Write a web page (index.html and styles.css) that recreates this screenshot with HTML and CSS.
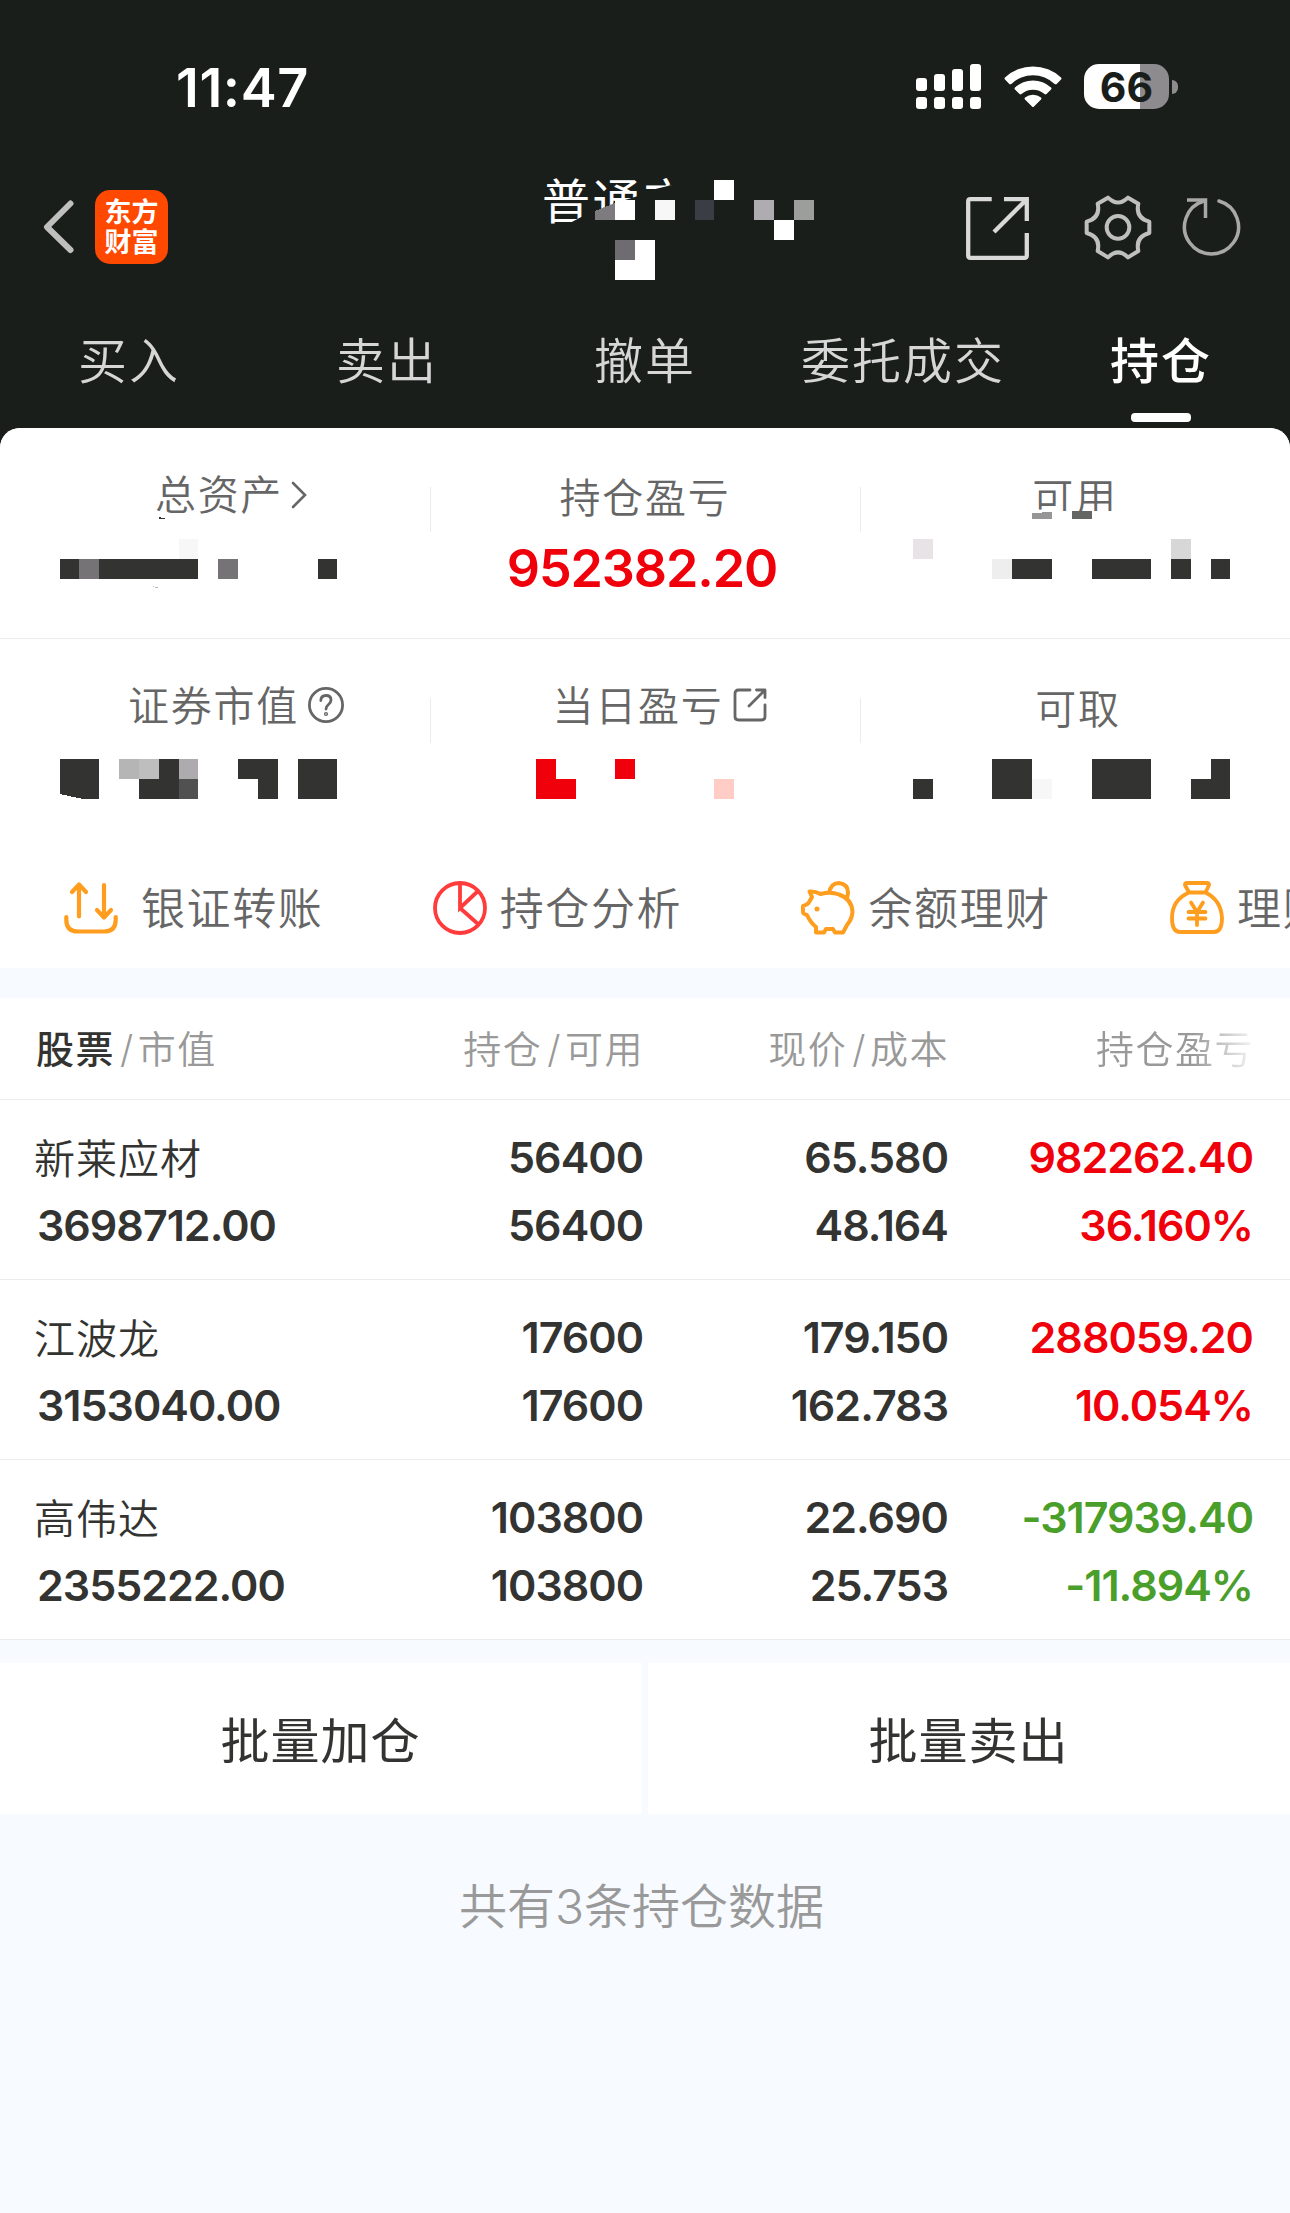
FILE: index.html
```html
<!DOCTYPE html>
<html lang="zh-CN">
<head>
    <meta charset="UTF-8">
    <meta name="viewport" content="width=device-width, initial-scale=1.0">
    <title>持仓</title>
    <link rel="stylesheet" href="styles.css">
</head>
<body>
    <header class="header">
        <div class="status-bar">
            <span class="time">11:47</span>
            <div class="status-icons">
                <svg class="signal" width="65" height="45" viewBox="0 0 65 45" fill="#fff">
                    <rect x="0" y="14" width="11" height="13" rx="3"/>
                    <rect x="18" y="10" width="11" height="17" rx="3"/>
                    <rect x="36" y="5" width="11" height="22" rx="3"/>
                    <rect x="54" y="0" width="11" height="27" rx="3"/>
                    <rect x="0" y="33" width="11" height="12" rx="3"/>
                    <rect x="18" y="33" width="11" height="12" rx="3"/>
                    <rect x="36" y="33" width="11" height="12" rx="3"/>
                    <rect x="54" y="33" width="11" height="12" rx="3"/>
                </svg>
                <svg class="wifi" width="58" height="43" viewBox="0 0 58 43" fill="#fff">
                    <path d="M1 12.5Q0 13.5 1 14.6L5.300 18.900Q6.300 19.800 7.400 18.900A31 31 0 0 1 50.600 18.900Q51.700 19.800 52.700 18.900L57 14.600Q58 13.500 57 12.500A41 41 0 0 0 1 12.500Z"/>
                    <path d="M11 22.500Q10 23.500 11 24.500L15.500 29Q16.500 29.800 17.500 29A17.500 17.500 0 0 1 40.500 29Q41.500 29.800 42.500 29L47 24.500Q48 23.500 47 22.500A26.500 26.500 0 0 0 11 22.500Z"/>
                    <path d="M21 32.500Q20 33.500 21 34.500L28 41.500Q29 42.500 30 41.500L37 34.500Q38 33.500 37 32.500A13 13 0 0 0 21 32.500Z"/>
                </svg>
                <div class="battery"><span class="battery-level">66</span></div>
                <span class="battery-tip"></span>
            </div>
        </div>

        <div class="nav-bar">
            <svg class="back" width="32" height="56" viewBox="0 0 32 56" fill="none" stroke="#bfbfbf" stroke-width="6" stroke-linecap="round" stroke-linejoin="round">
                <path d="M28.500 4.500L5 28L28.500 51"/>
            </svg>
            <div class="logo"><span>东方</span><span>财富</span></div>
            <div class="account">
                <span class="account-name">普通交</span>
                <svg class="account-mask" width="280" height="110" viewBox="540 175 280 110" shape-rendering="crispEdges">
                    <path fill="#7e7b7e" d="M595 211L615 203V220H595Z"/>
                    <rect x="615" y="200" width="20" height="20" fill="#fff"/>
                    <rect x="655" y="200" width="20" height="20" fill="#f7f7f7"/>
                    <rect x="695" y="200" width="19" height="20" fill="#3b3d44"/>
                    <rect x="714" y="180" width="20" height="20" fill="#fff"/>
                    <rect x="754" y="200" width="20" height="20" fill="#aeacb0"/>
                    <rect x="774" y="220" width="20" height="20" fill="#fff"/>
                    <rect x="794" y="200" width="20" height="20" fill="#9b9e9b"/>
                    <rect x="615" y="240" width="40" height="40" fill="#fff"/>
                    <rect x="615" y="240" width="20" height="20" fill="#6e6c70"/>
                </svg>
            </div>
            <svg class="share" width="64" height="64" viewBox="0 0 64 64" fill="none" stroke="#d9d9d9" stroke-width="4.300">
                <path d="M25.700 2.200H4.500Q2.200 2.200 2.200 4.500V58.500Q2.200 60.800 4.500 60.800H58.500Q60.800 60.800 60.800 58.500V36"/>
                <path d="M38 2.200H60.800V24M60 3L28 35"/>
            </svg>
            <svg class="settings" width="68" height="66" viewBox="611 493 204 198" fill="none" stroke="#bfbfbf" stroke-width="12" stroke-linejoin="round">
                <path d="M683 501Q713 530 743 501L774 519Q764.500 562 807 573V607Q764.500 618 774 661L743 680Q713 650 683 680L652 661Q661.500 618 619 607V573Q661.500 562 652 519Z"/>
                <circle cx="713" cy="590" r="34"/>
            </svg>
            <svg class="refresh" width="60" height="62" viewBox="0 0 60 62" fill="none" stroke="#a9a8a9" stroke-width="3.500">
                <path d="M37 5A27 27 0 1 1 22 5" stroke-linecap="round"/>
                <path d="M5 4H23.500V22"/>
            </svg>
        </div>

        <nav class="tabs">
            <span class="tab">买入</span>
            <span class="tab">卖出</span>
            <span class="tab">撤单</span>
            <span class="tab">委托成交</span>
            <span class="tab active">持仓</span>
        </nav>
    </header>

    <main>
        <section class="summary">
            <div class="summary-row">
                <div class="cell">
                    <div class="cell-label raised">总资产
                        <svg class="chevron" width="16" height="28" viewBox="0 0 16 28" fill="none" stroke="#666" stroke-width="2.600" stroke-linecap="round"><path d="M2 2L14 14L2 26"/></svg>
                    </div>
                    <svg class="mask" width="430" height="100" viewBox="0 505 430 100" fill="#333431" shape-rendering="crispEdges">
                        <path d="M159 517L165 518.500H159Z"/>
                        <path d="M152 586L158 587.500H155Z" fill="#bbb"/>
                        <rect x="179" y="539" width="19" height="20" fill="#f7f7f7"/>
                        <rect x="60" y="559" width="138" height="20"/>
                        <rect x="79" y="559" width="20" height="20" fill="#757376"/>
                        <rect x="218" y="559" width="20" height="20" fill="#757376"/>
                        <rect x="318" y="559" width="19" height="20"/>
                    </svg>
                </div>
                <div class="cell">
                    <div class="cell-label">持仓盈亏</div>
                    <div class="cell-value red">952382.20</div>
                </div>
                <div class="cell">
                    <div class="cell-label cut">可用</div>
                    <svg class="mask" width="430" height="100" viewBox="860 505 430 100" fill="#333431" shape-rendering="crispEdges">
                        <path d="M1032 513L1052 512V519H1032Z" fill="#969696"/>
                        <rect x="1072" y="511" width="20" height="8" fill="#646664"/>
                        <rect x="913" y="539" width="20" height="20" fill="#e7e3e7"/>
                        <rect x="1171" y="539" width="20" height="20" fill="#d7d7d7"/>
                        <rect x="992" y="559" width="20" height="20" fill="#eee"/>
                        <rect x="1012" y="559" width="40" height="20"/>
                        <rect x="1092" y="559" width="59" height="20"/>
                        <rect x="1171" y="559" width="20" height="20"/>
                        <rect x="1211" y="559" width="19" height="20"/>
                    </svg>
                </div>
            </div>
            <div class="summary-row second">
                <div class="cell">
                    <div class="cell-label value">证券市值
                        <svg class="help" width="36" height="36" viewBox="0 0 36 36" fill="none" stroke="#666" stroke-width="2.800" stroke-linecap="round">
                            <circle cx="18" cy="18" r="16.600"/>
                            <path d="M12.800 13.500Q13 8.500 18 8.500Q23 8.500 23 13Q23 15.500 20.500 17.500Q18 19.500 18 22"/>
                            <circle cx="18" cy="27" r="0.700"/>
                        </svg>
                    </div>
                    <svg class="mask" width="430" height="100" viewBox="0 715 430 100" fill="#333431" shape-rendering="crispEdges">
                        <path d="M60 759H99V799H83L60 794Z"/>
                        <rect x="119" y="759" width="20" height="20" fill="#b5b5b5"/>
                        <rect x="139" y="759" width="20" height="20" fill="#bebebe"/>
                        <path d="M159 759H179V799H139V779H159Z"/>
                        <rect x="179" y="759" width="19" height="20" fill="#adabae"/>
                        <rect x="179" y="779" width="19" height="20" fill="#525152"/>
                        <path d="M238 759H278V799H258V779H238Z"/>
                        <rect x="298" y="759" width="39" height="40"/>
                    </svg>
                </div>
                <div class="cell">
                    <div class="cell-label today">当日盈亏
                        <svg class="open" width="34" height="34" viewBox="0 0 34 34" fill="none" stroke="#666" stroke-width="2.800" stroke-linecap="round" stroke-linejoin="round">
                            <path d="M17 2H5.500Q2 2 2 5.500V28.500Q2 32 5.500 32H28.500Q32 32 32 28.500V17"/>
                            <path d="M23.500 2H32V9.500M31.500 2.500L16 18"/>
                        </svg>
                    </div>
                    <svg class="mask" width="430" height="100" viewBox="430 715 430 100" fill="#f0000a" shape-rendering="crispEdges">
                        <path d="M536 759H556V779H576V799H536Z"/>
                        <rect x="615" y="759" width="20" height="20"/>
                        <rect x="714" y="779" width="20" height="20" fill="#ffcdc5"/>
                    </svg>
                </div>
                <div class="cell">
                    <div class="cell-label lowered">可取</div>
                    <svg class="mask" width="430" height="100" viewBox="860 715 430 100" fill="#333431" shape-rendering="crispEdges">
                        <rect x="913" y="779" width="20" height="20"/>
                        <rect x="992" y="759" width="40" height="40"/>
                        <rect x="1032" y="779" width="20" height="20" fill="#f7f7f7"/>
                        <rect x="1092" y="759" width="59" height="40"/>
                        <path d="M1211 759H1230V799H1191V779H1211Z"/>
                    </svg>
                </div>
            </div>

            <div class="shortcuts">
                <div class="shortcut transfer">
                    <svg width="54" height="54" viewBox="0 0 54 54" fill="none" stroke="#ff9d1e" stroke-width="4.200" stroke-linecap="round" stroke-linejoin="round">
                        <path d="M15 35.500V4M8 11L15 3.500L22 11M40 4V35.500M33 29L40 36.500L47 29"/>
                        <path d="M2.300 36V39Q2.300 50.500 14 50.500H40Q51.700 50.500 51.700 39V36"/>
                    </svg>
                    <span>银证转账</span>
                </div>
                <div class="shortcut">
                    <svg width="54" height="54" viewBox="0 0 54 54" fill="none" stroke="#ff3b3b" stroke-width="3.800">
                        <circle cx="27" cy="27" r="25"/>
                        <path d="M27 2V27L45 10M27 27L45 43"/>
                    </svg>
                    <span>持仓分析</span>
                </div>
                <div class="shortcut">
                    <svg width="54" height="54" viewBox="0 0 54 54" fill="none" stroke="#ff9d1e" stroke-width="4" stroke-linejoin="round">
                        <path d="M8.500 10.500Q14 10 19.500 13Q30 10.500 38 13.500Q51 18 51.500 31Q51 38 46 44L42 51.500H34L32 48H25L23 51.500H15V46Q9 41 6 34Q2 33 2 31V25Q6 24 7.500 22Q10 18 11 16Z"/>
                        <path d="M28 12Q30 2 38 2Q47 3 47 12L46 17"/>
                        <circle cx="16" cy="28" r="2.500" fill="#ff9d1e" stroke="none"/>
                    </svg>
                    <span>余额理财</span>
                </div>
                <div class="shortcut">
                    <svg width="54" height="54" viewBox="0 0 54 54" fill="none" stroke="#ff9d1e" stroke-width="3.800" stroke-linecap="round" stroke-linejoin="round">
                        <path d="M19 11.500L15 4Q14.500 2 17 2H37Q39.500 2 39 4L35.500 11.500ZM19 11.500Q2 19 2 37Q2 51 10 51H44Q52 51 52 37Q51 19 35.500 11.500"/>
                        <path d="M21 21.500L27 31L33 21.500M18.500 31H35.500M18.500 37.500H35.500M27 31V44"/>
                    </svg>
                    <span>理财</span>
                </div>
            </div>
        </section>

        <section class="holdings">
            <div class="row head">
                <div><b>股票</b><i>/</i>市值</div>
                <div>持仓<i>/</i>可用</div>
                <div>现价<i>/</i>成本</div>
                <div class="fade">持仓盈亏</div>
            </div>
            <div class="row">
                <div><p class="name">新莱应材</p><p>3698712.00</p></div>
                <div><p>56400</p><p>56400</p></div>
                <div><p>65.580</p><p>48.164</p></div>
                <div class="red"><p>982262.40</p><p>36.160%</p></div>
            </div>
            <div class="row">
                <div><p class="name">江波龙</p><p>3153040.00</p></div>
                <div><p>17600</p><p>17600</p></div>
                <div><p>179.150</p><p>162.783</p></div>
                <div class="red"><p>288059.20</p><p>10.054%</p></div>
            </div>
            <div class="row">
                <div><p class="name">高伟达</p><p>2355222.00</p></div>
                <div><p>103800</p><p>103800</p></div>
                <div><p>22.690</p><p>25.753</p></div>
                <div class="green"><p>-317939.40</p><p>-11.894%</p></div>
            </div>
        </section>

        <div class="batch">
            <div class="batch-button">批量加仓</div>
            <div class="batch-button">批量卖出</div>
        </div>
        <p class="total">共有3条持仓数据</p>
    </main>
</body>
</html>
```

FILE: styles.css
```css
* {
    box-sizing: border-box;
}
body {
    margin: 0;
    width: 1290px;
    height: 2213px;
    overflow: hidden;
    font-family: Inter, "Noto Sans CJK SC", sans-serif;
    background-color: #1a1e1b;
    color: #333431;
}
p {
    margin: 0;
}
svg {
    display: block;
    flex: none;
}
.red {
    color: #f0000a;
}
.green {
    color: #4a9e2a;
}

/* Header */
.header {
    height: 428px;
    color: #fff;
}
.status-bar {
    display: flex;
    justify-content: space-between;
    height: 175px;
    padding: 64px 112px 0 176px;
}
.time {
    font-size: 54px;
    font-weight: 600;
    line-height: 47px;
    letter-spacing: 0.600px;
}
.status-icons {
    display: flex;
}
.wifi {
    margin: 1px 22px 0 23px;
}
.battery {
    width: 85px;
    height: 45px;
    border-radius: 15px;
    background: linear-gradient(to right, #fff 56px, #8e8b8f 56px);
    color: #1a1e1b;
    text-align: center;
}
.battery-level {
    font-size: 41px;
    font-weight: 700;
    line-height: 46px;
}
.battery-tip {
    width: 6px;
    height: 14px;
    margin: 16px 0 0 3px;
    border-radius: 0 6px 6px 0;
    background-color: #8e8b8f;
}
.nav-bar {
    display: flex;
    height: 125px;
    padding-left: 42px;
}
.back {
    margin-top: 24px;
}
.logo {
    display: flex;
    flex-direction: column;
    align-items: center;
    justify-content: center;
    width: 73px;
    height: 74px;
    margin: 15px 372px 0 21px;
    padding-top: 2px;
    border-radius: 15px;
    background-color: #ff4800;
    font-size: 27px;
    font-weight: 700;
    line-height: 30px;
}
.account {
    display: grid;
    width: 280px;
}
.account-name,
.account-mask {
    grid-area: 1 / 1;
}
.account-name {
    height: 60px;
    padding-left: 2px;
    font-size: 48px;
    line-height: 54px;
    letter-spacing: 2.500px;
    /* only the upper part of the name stays readable */
    clip-path: polygon(0 0, 134px 0, 132px 10px, 107px 16px, 100px 16px, 98px 21px, 75px 28px, 55px 36px, 45px 40px, 28px 49px, 0 51px);
}
.share {
    margin: 22px 0 0 146px;
}
.settings {
    margin: 20px 0 0 54px;
}
.refresh {
    margin: 21px 0 0 30px;
}
.tabs {
    display: grid;
    grid-template-columns: repeat(5, 1fr);
    height: 128px;
}
.tab {
    display: flex;
    flex-direction: column;
    align-items: center;
    color: #d6d6d6;
    font-size: 49px;
    font-weight: 350;
    line-height: 124px;
    letter-spacing: 2px;
}
.tab.active {
    color: #fff;
    font-weight: 500;
}
.tab.active::after {
    content: "";
    width: 60px;
    height: 9px;
    margin-top: -11px;
    border-radius: 4px;
    background-color: #fff;
}

/* Summary */
main {
    height: 1785px;
    border-radius: 20px 20px 0 0;
    background-color: #f7faff;
}
.summary {
    height: 540px;
    border-radius: 20px 20px 0 0;
    background-color: #fff;
    overflow: hidden;
}
.summary-row {
    display: grid;
    grid-template-columns: repeat(3, 430px);
    height: 211px;
    border-bottom: 1px solid #ececec;
}
.summary-row.second {
    height: 209px;
    border-bottom: 0;
}
.cell {
    padding-top: 37px;
    background: linear-gradient(#ececec, #ececec) 0 59px / 1px 45px no-repeat;
}
.cell:first-child {
    background: none;
}
.cell-label {
    display: flex;
    align-items: center;
    justify-content: center;
    height: 60px;
    margin-bottom: -20px;
    color: #666;
    font-size: 41px;
    font-weight: 350;
    letter-spacing: 1.700px;
}
.raised {
    padding: 0 0 6px 32px;
}
.cut {
    clip-path: inset(0 0 14px 0);
}
.second .cell-label {
    height: 54px;
    margin-bottom: -15px;
}
.second .lowered {
    padding: 5px 0 0 6px;
}
.second .value {
    padding-left: 42px;
}
.second .today {
    padding-left: 30px;
}
.chevron {
    margin: 5px 0 0 8px;
}
.help {
    margin: 3px 0 0 9px;
}
.open {
    margin: 3px 0 0 10px;
}
.cell-value {
    padding: 34px 6px 0 0;
    font-size: 52px;
    font-weight: 600;
    line-height: 60px;
    letter-spacing: -1.100px;
    text-align: center;
}
.shortcuts {
    display: flex;
    height: 120px;
    padding-left: 64px;
    overflow: hidden;
}
.shortcut {
    display: flex;
    flex: none;
    width: 368.700px;
    padding-top: 33px;
    color: #666;
    font-size: 44px;
    font-weight: 350;
    line-height: 56px;
    letter-spacing: 1.600px;
}
.shortcut span {
    margin-left: 13px;
}
.shortcut.transfer span {
    margin-left: 23px;
}

/* Holdings */
.holdings {
    margin-top: 30px;
    background-color: #fff;
}
.row {
    display: grid;
    grid-template-columns: 306px 300px 305px 305px;
    height: 180px;
    padding: 23px 37px 0 37px;
    border-bottom: 1px solid #ececec;
    font-size: 43px;
    font-weight: 600;
    line-height: 68px;
    letter-spacing: -1px;
    text-align: right;
}
.row > div:first-child {
    text-align: left;
}
.row .name {
    margin: 0 0 -4px -3px;
    font-size: 41px;
    font-weight: 350;
    line-height: 72px;
    letter-spacing: 1px;
}
.row.head {
    height: 102px;
    padding-top: 17px;
    color: #999;
    font-size: 38px;
    font-weight: 350;
    letter-spacing: 1.500px;
}
.head div {
    margin-right: -1px;
}
.head div:first-child {
    margin-left: -1px;
}
.head b {
    color: #333431;
    font-weight: 500;
}
.head i {
    margin: 0 3px 0 5px;
    font-style: normal;
}
.fade {
    -webkit-mask-image: linear-gradient(to right, #000 245px, transparent 312px);
    mask-image: linear-gradient(to right, #000 245px, transparent 312px);
}

/* Bottom */
.batch {
    display: grid;
    grid-template-columns: 1fr 1fr;
    gap: 6px;
    margin-top: 23px;
}
.batch-button {
    height: 151px;
    padding-right: 1px;
    background-color: #fff;
    font-size: 49px;
    font-weight: 400;
    line-height: 157px;
    letter-spacing: 1px;
    text-align: center;
}
.total {
    margin-top: 60px;
    padding-right: 7px;
    color: #999;
    font-size: 48px;
    font-weight: 350;
    line-height: 66px;
    text-align: center;
}
```
